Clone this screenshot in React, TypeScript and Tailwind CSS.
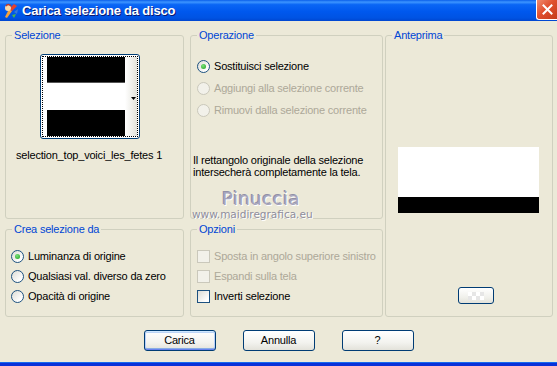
import React from 'react';

const labelBlue = 'text-[#0046D5]';

function Radio({ checked = false, disabled = false, label }: { checked?: boolean; disabled?: boolean; label: string }) {
  return (
    <div className="flex items-center h-full">
      <span
        className={`relative w-[13px] h-[13px] shrink-0 rounded-full border ${
          disabled ? 'border-[#CAC8BB] bg-[#F2F1EA]' : 'border-[#1C5180] bg-[linear-gradient(135deg,#DCDCD5,#FFFFFF_80%)]'
        }`}
      >
        {checked && (
          <span className="absolute left-[3px] top-[3px] w-[5px] h-[5px] rounded-full bg-[radial-gradient(circle_at_40%_35%,#7BE27B,#1E9E1E)]" />
        )}
      </span>
      <span className={`ml-[4px] whitespace-nowrap ${disabled ? 'text-[#ACA899]' : 'text-black'}`}>{label}</span>
    </div>
  );
}

function Check({ disabled = false, label }: { disabled?: boolean; label: string }) {
  return (
    <div className="flex items-center h-full">
      <span
        className={`w-[13px] h-[13px] shrink-0 border ${
          disabled ? 'border-[#CAC8BB] bg-[#F2F1EA]' : 'border-[#1C5180] bg-[linear-gradient(135deg,#DCDCD5,#FFFFFF_80%)]'
        }`}
      />
      <span className={`ml-[4px] whitespace-nowrap ${disabled ? 'text-[#ACA899]' : 'text-black'}`}>{label}</span>
    </div>
  );
}

function Group({ title, className, children }: { title: string; className: string; children?: React.ReactNode }) {
  return (
    <fieldset className={`border border-[#D0D0BF] rounded-[3px] ${className}`}>
      <legend className={`ml-[6px] px-[2px] leading-[13px] ${labelBlue}`}>{title}</legend>
      {children}
    </fieldset>
  );
}

function XpButton({ label, primary = false }: { label: string; primary?: boolean }) {
  return (
    <button
      className={`h-[21px] w-[72px] rounded-[3px] border border-[#003C74] bg-[linear-gradient(to_bottom,#FFFFFF,#F3F3EF_60%,#E3E2DA)] text-black text-[11px] ${
        primary
          ? 'shadow-[inset_0_1px_0_#CEE7FF,inset_0_-1px_0_#6982EE,inset_1px_0_0_#B9D1FA,inset_-1px_0_0_#B9D1FA,inset_0_2px_0_#BCD4F6,inset_0_-2px_0_#89ADE4]'
          : ''
      }`}
    >
      {label}
    </button>
  );
}

function AppIcon() {
  return (
    <svg width="16" height="16" viewBox="0 0 16 16">
      <path d="M2 14 L6 6 L9 8 L4 15 Z" fill="#F4A23A" />
      <path d="M6 6 L11 1 L14 3 L9 8 Z" fill="#E8412C" />
      <circle cx="5" cy="5" r="3" fill="#F7D7A8" />
      <path d="M3 3 Q5 0 8 3" stroke="#C0392B" strokeWidth="1.5" fill="none" />
      <path d="M11 9 L15 6 L14 11 Z" fill="#3A7BD5" />
      <path d="M9 12 L13 11 L11 15 Z" fill="#4CB648" />
    </svg>
  );
}

export default function App() {
  return (
    <div className="relative w-[557px] h-[366px] overflow-hidden bg-[#ECE9D8] font-['Liberation_Sans',Arial,sans-serif] text-[11px] tracking-[-0.2px] text-black">
      {/* title bar */}
      <div className="relative h-[21px] flex items-center bg-[linear-gradient(to_bottom,#0A5FEA_0%,#3D95FF_10%,#0A66F5_22%,#0058EE_55%,#0053E3_85%,#0046D0_100%)]">
        <span className="ml-[3px] flex">
          <AppIcon />
        </span>
        <span className="ml-[3px] text-white font-bold text-[13px] leading-[21px] tracking-[-0.2px] [text-shadow:1px_1px_#0A1870]">
          Carica selezione da disco
        </span>
        <div className="absolute top-0 right-0 w-[21px] h-[20px] rounded-bl-[3px] border-l border-b border-white bg-[linear-gradient(135deg,#F08B6E,#E0502F_45%,#C53A1A)] flex items-center justify-center">
          <svg width="11" height="11" viewBox="0 0 11 11">
            <path d="M1.5 1.5 L9.5 9.5 M9.5 1.5 L1.5 9.5" stroke="white" strokeWidth="2" strokeLinecap="square" />
          </svg>
        </div>
      </div>

      {/* body */}
      <div className="flex pl-[5px] pt-[8px]">
        {/* left column */}
        <div className="w-[179px] flex flex-col">
          <Group title="Selezione" className="h-[190px]">
            <div className="ml-[34px] mt-[12px] w-[100px] h-[85px] rounded-[3px] border border-[#003C74] bg-white p-[1px]">
              <div className="h-full border border-dotted border-black flex">
                <div className="ml-[4px] w-[78px] flex flex-col">
                  <div className="h-[26px] bg-black border-b border-[#555]" />
                  <div className="h-[27px] bg-white" />
                  <div className="h-[26px] bg-black" />
                </div>
                <div className="flex-1 bg-[linear-gradient(to_right,#FFFFFF,#E3E2DA)] flex items-center justify-end pr-[1px]">
                  <svg width="5" height="3" viewBox="0 0 5 3" className="mt-[3px]">
                    <path d="M0 0 H5 L2.5 3 Z" fill="#000" />
                  </svg>
                </div>
              </div>
            </div>
            <div className="ml-[10px] mt-[10px] leading-[13px] whitespace-nowrap">selection_top_voici_les_fetes 1</div>
          </Group>
          <Group title="Crea selezione da" className="mt-[4px] h-[94px]">
            <div className="ml-[5px] mt-[10px] flex flex-col">
              <div className="h-[20px]">
                <Radio checked label="Luminanza di origine" />
              </div>
              <div className="h-[20px]">
                <Radio label="Qualsiasi val. diverso da zero" />
              </div>
              <div className="h-[20px]">
                <Radio label="Opacità di origine" />
              </div>
            </div>
          </Group>
        </div>

        {/* middle column */}
        <div className="ml-[6px] w-[193px] flex flex-col">
          <Group title="Operazione" className="h-[190px]">
            <div className="ml-[6px] mt-[13px] flex flex-col">
              <div className="h-[22px]">
                <Radio checked label="Sostituisci selezione" />
              </div>
              <div className="h-[22px]">
                <Radio disabled label="Aggiungi alla selezione corrente" />
              </div>
              <div className="h-[22px]">
                <Radio disabled label="Rimuovi dalla selezione corrente" />
              </div>
            </div>
            <p className="ml-[2px] mt-[33px] leading-[12px]">
              Il rettangolo originale della selezione
              <br />
              intersecherà completamente la tela.
            </p>
          </Group>
          <Group title="Opzioni" className="mt-[4px] h-[94px]">
            <div className="ml-[6px] mt-[10px] flex flex-col">
              <div className="h-[20px]">
                <Check disabled label="Sposta in angolo superiore sinistro" />
              </div>
              <div className="h-[20px]">
                <Check disabled label="Espandi sulla tela" />
              </div>
              <div className="h-[20px]">
                <Check label="Inverti selezione" />
              </div>
            </div>
          </Group>
        </div>

        {/* right column */}
        <div className="ml-[2px] w-[168px]">
          <Group title="Anteprima" className="h-[288px]">
            <div className="ml-[12px] mt-[105px] w-[141px] flex flex-col">
              <div className="h-[50px] bg-white" />
              <div className="h-[16px] bg-black" />
            </div>
            <div className="ml-[72px] mt-[74px] w-[36px] h-[17px] rounded-[3px] border border-[#003C74] bg-[linear-gradient(to_bottom,#FFFFFF,#F1F1EC_60%,#E3E2DA)] flex items-center justify-center">
              <div className="w-[16px] h-[8px] bg-[repeating-conic-gradient(#E6E6E6_0%_25%,#FFFFFF_0%_50%)] bg-[length:8px_8px]" />
            </div>
          </Group>
        </div>
      </div>

      {/* buttons */}
      <div className="mt-[13px] flex justify-center gap-[27px]">
        <XpButton label="Carica" primary />
        <XpButton label="Annulla" />
        <XpButton label="?" />
      </div>

      {/* watermark */}
      <div className="absolute left-[222px] top-[189px] font-['DejaVu_Sans',sans-serif] text-[18px] leading-[20px] tracking-[0.5px] text-[#A6A5BC] [text-shadow:1px_1px_#FFFFFF,-1px_-1px_#9190A8]">
        Pinuccia
      </div>
      <div className="absolute left-[192px] top-[208px] font-['DejaVu_Sans',sans-serif] text-[10.5px] leading-[13px] tracking-normal text-[#8E8D9C] [text-shadow:1px_1px_#FFFFFF]">
        www.maidiregrafica.eu
      </div>

      {/* window bottom frame */}
      <div className="absolute left-0 right-0 bottom-0 h-[4px] bg-[#0831D9] border-t border-[#166AEE]" />
    </div>
  );
}
